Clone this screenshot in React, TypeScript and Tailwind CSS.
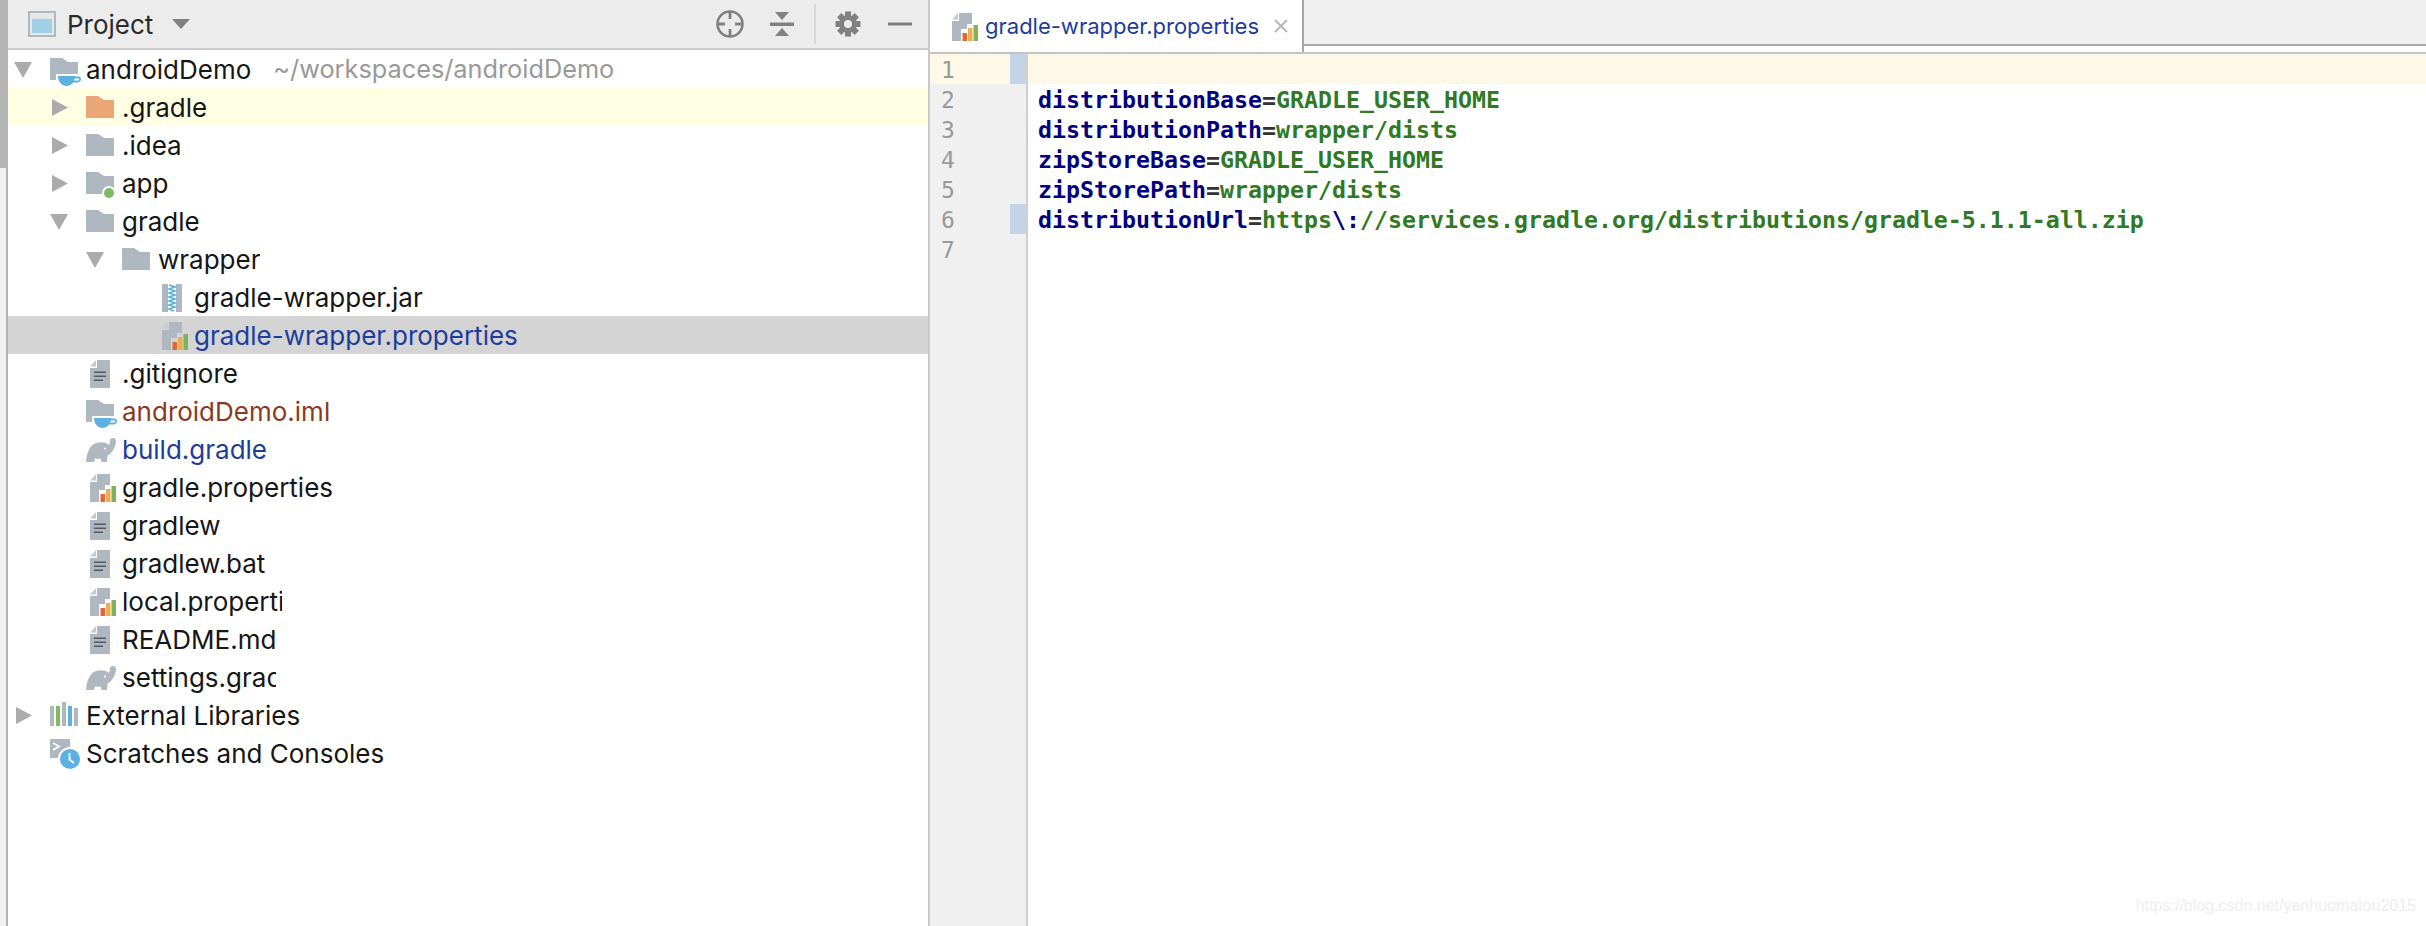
import type { ReactNode } from "react"

const GRAY = "#afb8c0"

function Box({ children }: { children: ReactNode }) {
    return (
        <svg width="36" height="38" viewBox="0 0 36 38" className="shrink-0">
            {children}
        </svg>
    )
}

const ArrowRight = () => (
    <Box>
        <path d="M2 11 L18 19.5 L2 28 Z" fill="#ababab" />
    </Box>
)

const ArrowDown = () => (
    <Box>
        <path d="M0 12 H18 L9 28 Z" fill="#ababab" />
    </Box>
)

const FOLDER = "M0 8 H12 L18 12 H28 V30 H0 Z"

const Folder = ({ color = GRAY }: { color?: string }) => (
    <Box>
        <path d={FOLDER} fill={color} />
    </Box>
)

const ModuleFolder = () => (
    <Box>
        <path d={FOLDER} fill={GRAY} />
        <path d="M6 24 H32 V38 H6 Z" fill="#fff" />
        <path d="M0 24 H6 V30 H0 Z" fill={GRAY} />
        <path d="M8 26 H25 C25 32 21 36 16.5 36 C12 36 8 32 8 26 Z" fill="#5db1e0" />
        <path d="M24 27.5 H29 C30.5 27.5 30.5 31.5 28 31.5 H22.5" fill="none" stroke="#5db1e0" strokeWidth="1.8" />
    </Box>
)

const AppFolder = () => (
    <Box>
        <path d={FOLDER} fill={GRAY} />
        <circle cx="23" cy="29" r="7" fill="#fff" />
        <circle cx="23" cy="29" r="5" fill="#7fbb5f" />
    </Box>
)

const FileBody = ({ d = "M11 6 H24 V34 H4 V14 H11 Z" }: { d?: string }) => (
    <>
        <path d={d} fill={GRAY} />
        <path d="M4 12.5 L10 6 V12.5 Z" fill="#c3cad0" />
    </>
)

const TextFile = () => (
    <Box>
        <FileBody />
        <path d="M8 17.5 H20 V19 H8 Z M8 21.5 H20 V23 H8 Z M8 25.5 H17 V27 H8 Z" fill="#555a5f" />
    </Box>
)

const PropsFile = () => (
    <Box>
        <FileBody d="M11 6 H24 V17 H19 V22 H13 V34 H4 V14 H11 Z" />
        <rect x="14.5" y="26" width="4.5" height="8" fill="#e0673a" />
        <rect x="20" y="21" width="4.5" height="13" fill="#e8b050" />
        <rect x="25.5" y="18" width="4.5" height="16" fill="#7eb35a" />
    </Box>
)

const JarFile = () => (
    <Box>
        <path d="M4 6 H10 V34 H4 Z M18 6 H24 V34 H18 Z" fill={GRAY} />
        <path
            d="M11 7 L17 9 L11 11 L17 13 L11 15 L17 17 L11 19 L17 21 L11 23 L17 25 L11 27 L17 29 L11 31 L16 33"
            fill="none"
            stroke="#5db1e0"
            strokeWidth="1.7"
        />
    </Box>
)

const Elephant = () => (
    <Box>
        <path
            d="M0 32 C0.5 25 2 20 5 16.5 C7.5 13.5 11 12.3 15 12.3 C18 12.3 20.5 13 22.5 14.8 C23.8 14 24 13 23.8 12 C23.3 9.5 25 8 27.3 8 C29.6 8 30.5 10.5 29.8 13 C29 17.5 27 21.5 23.5 24.5 L21.5 25.5 L21 32 H15.5 L14.5 28.5 C12.5 29 10.8 29 9.2 28.3 L8 32 Z"
            fill={GRAY}
        />
        <circle cx="19" cy="18.5" r="1" fill="#fff" />
    </Box>
)

const Libraries = () => (
    <Box>
        <rect x="0" y="10" width="4" height="20" fill={GRAY} />
        <rect x="6" y="10" width="4" height="20" fill="#7fbb5f" />
        <rect x="12" y="6" width="4" height="24" fill={GRAY} />
        <rect x="18" y="10" width="4" height="20" fill="#5db1e0" />
        <rect x="24" y="12" width="4" height="18" fill={GRAY} />
    </Box>
)

const Scratches = () => (
    <Box>
        <rect x="0" y="5" width="20" height="19" fill={GRAY} />
        <path d="M3 9 L9 12.5 L3 16" fill="none" stroke="#fff" strokeWidth="1.8" />
        <circle cx="20" cy="25" r="12" fill="#fff" />
        <circle cx="20" cy="25" r="10" fill="#5db1e0" />
        <path d="M19.5 19 V25.5 L24 29" fill="none" stroke="#fff" strokeWidth="1.8" />
    </Box>
)

const BLACK = "text-[#161616]"
const BLUE = "text-[#1c3d9c]"

type Row = {
    label: string
    indent: string
    arrow?: "right" | "down"
    icon: ReactNode
    color?: string
    bg?: string
    hint?: string
    clip?: string
}

const rows: Row[] = [
    { label: "androidDemo", indent: "pl-[6px]", arrow: "down", icon: <ModuleFolder />, hint: "~/workspaces/androidDemo" },
    { label: ".gradle", indent: "pl-[42px]", arrow: "right", icon: <Folder color="#eba678" />, bg: "bg-[#ffffe4]" },
    { label: ".idea", indent: "pl-[42px]", arrow: "right", icon: <Folder /> },
    { label: "app", indent: "pl-[42px]", arrow: "right", icon: <AppFolder /> },
    { label: "gradle", indent: "pl-[42px]", arrow: "down", icon: <Folder /> },
    { label: "wrapper", indent: "pl-[78px]", arrow: "down", icon: <Folder /> },
    { label: "gradle-wrapper.jar", indent: "pl-[150px]", icon: <JarFile /> },
    { label: "gradle-wrapper.properties", indent: "pl-[150px]", icon: <PropsFile />, color: BLUE, bg: "bg-[#d4d4d4]" },
    { label: ".gitignore", indent: "pl-[78px]", icon: <TextFile /> },
    { label: "androidDemo.iml", indent: "pl-[78px]", icon: <ModuleFolder />, color: "text-[#8a3a1e]" },
    { label: "build.gradle", indent: "pl-[78px]", icon: <Elephant />, color: BLUE },
    { label: "gradle.properties", indent: "pl-[78px]", icon: <PropsFile /> },
    { label: "gradlew", indent: "pl-[78px]", icon: <TextFile /> },
    { label: "gradlew.bat", indent: "pl-[78px]", icon: <TextFile /> },
    { label: "local.properties", indent: "pl-[78px]", icon: <PropsFile />, clip: "w-[160px]" },
    { label: "README.md", indent: "pl-[78px]", icon: <TextFile /> },
    { label: "settings.gradle", indent: "pl-[78px]", icon: <Elephant />, clip: "w-[154px]" },
    { label: "External Libraries", indent: "pl-[6px]", arrow: "right", icon: <Libraries /> },
    { label: "Scratches and Consoles", indent: "pl-[6px]", icon: <Scratches /> },
]

function TreeRow({ row }: { row: Row }) {
    const hasSlot = row.arrow || row.indent === "pl-[6px]"
    return (
        <div className={`flex h-[38px] items-center ${row.indent} ${row.bg ?? ""}`}>
            {hasSlot && (
                <span className="w-9 shrink-0">
                    {row.arrow === "right" && <ArrowRight />}
                    {row.arrow === "down" && <ArrowDown />}
                </span>
            )}
            {row.icon}
            <span className={`overflow-hidden whitespace-nowrap ${row.clip ?? ""} ${row.color ?? BLACK}`}>{row.label}</span>
            {row.hint && <span className="ml-[22px] whitespace-nowrap text-[25.3px] text-[#999999]">{row.hint}</span>}
        </div>
    )
}

function HeaderIcons() {
    const teeth = [0, 45, 90, 135, 180, 225, 270, 315]
    return (
        <div className="ml-auto flex items-center pr-[10px]">
            <svg width="36" height="48" viewBox="0 0 36 48">
                <circle cx="18" cy="24" r="12.5" fill="none" stroke="#808080" strokeWidth="2.6" />
                <path d="M18 11 V19 M18 29 V37 M5 24 H13 M23 24 H31" stroke="#808080" strokeWidth="2.8" />
            </svg>
            <svg width="36" height="48" viewBox="0 0 36 48" className="ml-4">
                <path d="M6 22.5 H30 V26 H6 Z M11 12 H25 L18 20 Z M18 28 L25 36 H11 Z" fill="#808080" />
            </svg>
            <div className="ml-[14px] mr-[14px] h-10 w-[2px] bg-[#d8d8d8]" />
            <svg width="36" height="48" viewBox="0 0 36 48">
                {teeth.map((a) => (
                    <rect key={a} x="15" y="11.5" width="6" height="6" fill="#808080" transform={`rotate(${a} 18 24)`} />
                ))}
                <circle cx="18" cy="24" r="9" fill="#808080" />
                <circle cx="18" cy="24" r="4" fill="#ececec" />
            </svg>
            <svg width="36" height="48" viewBox="0 0 36 48" className="ml-4">
                <rect x="6" y="22.5" width="24" height="3" fill="#808080" />
            </svg>
        </div>
    )
}

const code: { key: string; value: ReactNode }[] = [
    { key: "distributionBase", value: "GRADLE_USER_HOME" },
    { key: "distributionPath", value: "wrapper/dists" },
    { key: "zipStoreBase", value: "GRADLE_USER_HOME" },
    { key: "zipStorePath", value: "wrapper/dists" },
    {
        key: "distributionUrl",
        value: (
            <>
                https<span className="text-[#000080]">\:</span>//services.gradle.org/distributions/gradle-5.1.1-all.zip
            </>
        ),
    },
]

const lineNumbers = [1, 2, 3, 4, 5, 6, 7]

export default function App() {
    return (
        <div className="relative flex h-[926px] w-[2426px] overflow-hidden bg-white font-['Inter',sans-serif]">
            <div className="w-[6px] shrink-0 bg-[#f2f2f2]">
                <div className="h-[168px] bg-[#b4b4b4]" />
            </div>

            {/* project panel */}
            <div className="w-[924px] shrink-0 border-x-2 border-l-[#b4b4b4] border-r-[#c9c9c9] text-[26px]">
                <div className="flex h-[50px] items-center border-b-2 border-[#cccccc] bg-[#ececec]">
                    <svg width="28" height="26" viewBox="0 0 28 26" className="ml-5 shrink-0">
                        <rect width="28" height="26" fill="#b0b8bf" />
                        <rect x="2" y="2" width="24" height="22" fill="#e4e8ea" />
                        <rect x="4" y="8" width="20" height="14" fill="#a0d0e6" />
                    </svg>
                    <span className="ml-[11px] text-[#2a2a2a]">Project</span>
                    <svg width="18" height="10" viewBox="0 0 18 10" className="ml-[19px]">
                        <path d="M0 0 H18 L9 10 Z" fill="#808080" />
                    </svg>
                    <HeaderIcons />
                </div>
                {rows.map((row) => (
                    <TreeRow key={row.label} row={row} />
                ))}
            </div>

            {/* editor */}
            <div className="flex min-w-0 flex-1 flex-col">
                <div className="flex h-[54px] border-b-2 border-[#c4c4c4]">
                    <div className="flex w-[374px] items-center border-r-2 border-[#a8a8a8] pl-[18px]">
                        <PropsFile />
                        <span className={`ml-px text-[22px] ${BLUE}`}>gradle-wrapper.properties</span>
                        <svg width="14" height="14" viewBox="0 0 14 14" className="ml-[15px]">
                            <path d="M1 1 L13 13 M13 1 L1 13" stroke="#b8b8b8" strokeWidth="2" />
                        </svg>
                    </div>
                    <div className="h-[46px] flex-1 border-b-2 border-[#a8a8a8] bg-[#f0f0f0]" />
                </div>
                <div className="flex flex-1">
                    <div className="w-[98px] shrink-0 border-r-2 border-[#cfcfcf] bg-[#f0f0f0] font-['DejaVu_Sans_Mono',monospace] text-[23px] text-[#999999]">
                        {lineNumbers.map((n) => (
                            <div key={n} className={`flex h-[30px] items-center ${n === 1 ? "bg-[#fef9e7]" : ""}`}>
                                <span className="w-20 pl-[11px] pt-[2px]">{n}</span>
                                {(n === 1 || n === 6) && <span className="h-full w-4 bg-[#c3d4e6]" />}
                            </div>
                        ))}
                    </div>
                    <div className="flex-1 font-['DejaVu_Sans_Mono',monospace] text-[23.25px] font-bold">
                        <div className="h-[30px] bg-[#fef9e7]" />
                        {code.map((line) => (
                            <div key={line.key} className="flex h-[30px] items-center whitespace-pre pl-[10px] pt-[2px] text-[#2f7a22]">
                                <span className="text-[#000080]">{line.key}</span>
                                <span className="text-[#333333]">=</span>
                                <span>{line.value}</span>
                            </div>
                        ))}
                    </div>
                </div>
            </div>

            <span className="absolute bottom-[8px] right-[10px] font-['Liberation_Sans',sans-serif] text-[16px] text-[#eeeeee]">
                https://blog.csdn.net/yanhuomatou2015
            </span>
        </div>
    )
}
